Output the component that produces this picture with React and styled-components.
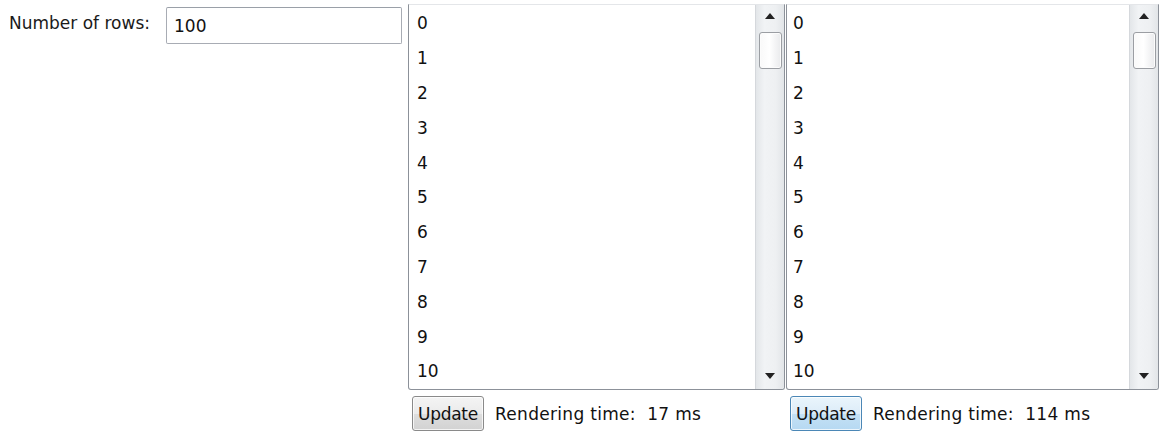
import React from "react";
import styled, { createGlobalStyle } from "styled-components";

const Global = createGlobalStyle`
  html, body { margin: 0; padding: 0; background: #fff; }
  body {
    font-family: "DejaVu Sans", "Liberation Sans", sans-serif;
    font-size: 17px;
    color: #1a1a1a;
    width: 1162px;
    height: 438px;
    overflow: hidden;
  }
`;

const Page = styled.div`
  display: flex;
  align-items: flex-start;
  padding-top: 4px;
`;

const FieldLabel = styled.label`
  width: 157px;
  padding-left: 9px;
  margin-top: 8px;
  line-height: 22px;
  box-sizing: content-box;
  white-space: nowrap;
`;

const TextInput = styled.div`
  width: 236px;
  height: 37px;
  margin-top: 3px;
  border: 1px solid #a8acb4;
  border-top-color: #9aa0a8;
  border-radius: 2px;
  box-sizing: border-box;
  padding-left: 7px;
  display: flex;
  align-items: center;
  color: #111;
  background: #fff;
`;

const Pane = styled.div`
  display: flex;
  flex-direction: column;
  width: ${(p) => p.$w}px;
  margin-left: ${(p) => p.$gap}px;
`;

const ListBox = styled.div`
  height: 386px;
  border: 1px solid #8c9199;
  border-top-color: #e4e6e9;
  border-radius: 0 0 3px 3px;
  box-sizing: border-box;
  display: flex;
  overflow: hidden;
  background: #fff;
`;

const Items = styled.div`
  flex: 1;
  overflow: hidden;
  padding-left: ${(p) => p.$pad}px;
  padding-top: 1px;
`;

const Item = styled.div`
  height: 34.8px;
  display: flex;
  align-items: center;
  color: #111;
`;

const Track = styled.div`
  width: 28px;
  flex: none;
  position: relative;
  border-left: 1px solid #d5d8dc;
  background: linear-gradient(
    90deg,
    #e3e6e9 0%,
    #f1f3f5 30%,
    #eef0f2 70%,
    #e2e5e8 100%
  );
`;

const Arrow = styled.div`
  height: 22px;
  display: flex;
  align-items: center;
  justify-content: center;
`;

const Thumb = styled.div`
  position: absolute;
  left: 3px;
  right: 2px;
  top: 27px;
  height: 35px;
  border: 1px solid #9b9ea3;
  border-radius: 3px;
  background: linear-gradient(90deg, #f9f9f9 0%, #ffffff 45%, #e9eaec 100%);
  box-shadow: inset 0 0 0 1px #fcfcfc;
`;

const BottomArrow = styled(Arrow)`
  position: absolute;
  left: 0;
  right: 0;
  bottom: 0;
  height: 26px;
`;

const Footer = styled.div`
  display: flex;
  align-items: center;
  gap: 11px;
  margin-top: 6px;
  padding-left: 4px;
`;

const Button = styled.button`
  font: inherit;
  line-height: 20px;
  letter-spacing: -0.3px;
  color: #111;
  width: 72px;
  height: 35px;
  padding: 0;
  overflow: visible;
  white-space: nowrap;
  border-radius: 3px;
  border: 1px solid ${(p) => (p.$active ? "#4b87b6" : "#8a8a8a")};
  background: ${(p) =>
    p.$active
      ? "linear-gradient(180deg, #eaf5fc 0%, #dcecf8 50%, #c4e1f5 51%, #b6d9f2 100%)"
      : "linear-gradient(180deg, #f4f4f4 0%, #ebebeb 50%, #dedede 51%, #d2d2d2 100%)"};
  box-shadow: inset 0 0 0 1px rgba(255, 255, 255, 0.75);
`;

const Status = styled.span`
  white-space: pre;
  letter-spacing: 0.3px;
  color: #111;
`;

const Up = () => (
  <svg width="10" height="6" viewBox="0 0 10 6">
    <path d="M5 0 L10 6 L0 6 Z" fill="#222" />
  </svg>
);

const Down = () => (
  <svg width="10" height="6" viewBox="0 0 10 6">
    <path d="M0 0 L10 0 L5 6 Z" fill="#222" />
  </svg>
);

const rows = Array.from({ length: 12 }, (_, i) => i);

function NumberList({ width, gap, pad, time, active }) {
  return (
    <Pane $w={width} $gap={gap}>
      <ListBox>
        <Items $pad={pad}>
          {rows.map((n) => (
            <Item key={n}>{n}</Item>
          ))}
        </Items>
        <Track>
          <Arrow>
            <Up />
          </Arrow>
          <Thumb />
          <BottomArrow>
            <Down />
          </BottomArrow>
        </Track>
      </ListBox>
      <Footer>
        <Button $active={active}>Update</Button>
        <Status>{`Rendering time:  ${time} ms`}</Status>
      </Footer>
    </Pane>
  );
}

export default function App() {
  return (
    <>
      <Global />
      <Page>
        <FieldLabel>Number of rows:</FieldLabel>
        <TextInput>100</TextInput>
        <NumberList width={377} gap={6} pad={8} time={17} />
        <NumberList width={373} gap={1} pad={6} time={114} active />
      </Page>
    </>
  );
}
